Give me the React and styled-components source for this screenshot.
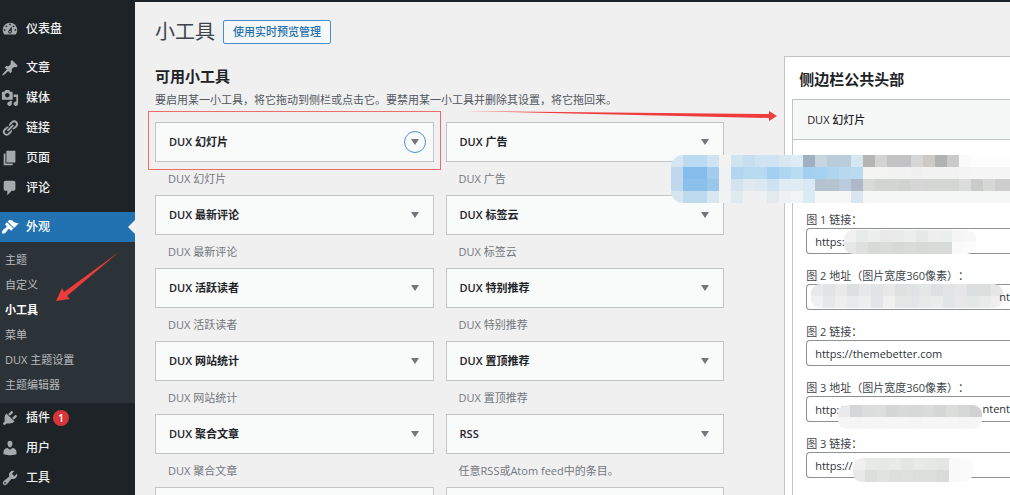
import React from 'react'
import styled, { createGlobalStyle, css } from 'styled-components'

const icons = {
  dashboard:
    'M3.76 16h12.48c1.1-1.37 1.76-3.11 1.76-5 0-4.42-3.58-8-8-8s-8 3.58-8 8c0 1.89.66 3.63 1.76 5zM10 4c.55 0 1 .45 1 1s-.45 1-1 1-1-.45-1-1 .45-1 1-1zM6 6c.55 0 1 .45 1 1s-.45 1-1 1-1-.45-1-1 .45-1 1-1zm8 0c.55 0 1 .45 1 1s-.45 1-1 1-1-.45-1-1 .45-1 1-1zm-5.37 5.55L12 7v6c0 1.1-.9 2-2 2s-2-.9-2-2c0-.57.24-1.08.63-1.45zM4 10c.55 0 1 .45 1 1s-.45 1-1 1-1-.45-1-1 .45-1 1-1zm12 0c.55 0 1 .45 1 1s-.45 1-1 1-1-.45-1-1 .45-1 1-1zm-5 3c0-.55-.45-1-1-1s-1 .45-1 1 .45 1 1 1 1-.45 1-1z',
  post:
    'M10.44 3.02l1.82-1.82 6.36 6.35-1.83 1.82c-1.05-.68-2.48-.57-3.41.36l-.75.75c-.92.93-1.04 2.35-.35 3.41l-1.83 1.82-2.41-2.41-2.8 2.79c-.42.42-3.38 2.71-3.8 2.29s1.86-3.39 2.28-3.81l2.79-2.79L4.1 9.36l1.83-1.82c1.05.69 2.48.57 3.4-.36l.75-.75c.93-.92 1.05-2.35.36-3.41z',
  media:
    'M13 11V4c0-.55-.45-1-1-1h-1.67L9 1H5L3.67 3H2c-.55 0-1 .45-1 1v7c0 .55.45 1 1 1h10c.55 0 1-.45 1-1zM7 4.5c1.38 0 2.5 1.12 2.5 2.5S8.38 9.5 7 9.5 4.5 8.38 4.5 7 5.62 4.5 7 4.5zM14 6h5v10.5c0 1.38-1.12 2.5-2.5 2.5S14 17.88 14 16.5s1.12-2.5 2.5-2.5c.17 0 .34.02.5.05V9h-3V6zm-4 8.05V13h2v3.5c0 1.38-1.12 2.5-2.5 2.5S7 17.88 7 16.5 8.12 14 9.5 14c.17 0 .34.02.5.05z',
  links:
    'M17.74 2.76c1.68 1.69 1.68 4.41 0 6.1l-1.53 1.52c-1.12 1.12-2.7 1.47-4.14 1.09l2.62-2.61.76-.77.76-.76c.84-.84.84-2.2 0-3.04-.84-.85-2.2-.85-3.04 0l-.77.76-3.38 3.38c-.37-1.44-.02-3.02 1.1-4.14l1.52-1.53c1.69-1.68 4.42-1.68 6.1 0zM8.59 13.43l5.34-5.34c.42-.42.42-1.1 0-1.52-.44-.43-1.13-.39-1.53 0l-5.33 5.34c-.42.42-.42 1.1 0 1.52.44.43 1.13.39 1.52 0zm-.76 2.29l4.14-4.15c.38 1.44.03 3.02-1.09 4.14l-1.52 1.53c-1.69 1.68-4.41 1.68-6.1 0-1.68-1.68-1.68-4.42 0-6.1l1.53-1.52c1.12-1.12 2.7-1.47 4.14-1.1l-4.14 4.15c-.85.84-.85 2.2 0 3.05.84.84 2.2.84 3.04 0z',
  page: 'M6 15V2h10v13H6zm-1 1h8v2H3V5h2v11z',
  comments:
    'M5 2h9c1.1 0 2 .9 2 2v7c0 1.1-.9 2-2 2h-2l-5 5v-5H5c-1.1 0-2-.9-2-2V4c0-1.1.9-2 2-2z',
  appearance:
    'M14.48 11.06L7.41 3.99l1.5-1.5c.5-.56 2.3-.47 3.51.32 1.21.8 1.43 1.28 2.91 2.1 1.18.64 2.45 1.26 4.45.85zm-.71.71L6.7 4.7 4.93 6.47c-.39.39-.39 1.02 0 1.41l1.06 1.06c.39.39.39 1.03 0 1.42-.6.6-1.43 1.11-2.21 1.69-.35.26-.7.53-1.01.84C1.43 14.23.4 16.08 1.4 17.07c.99 1 2.84-.03 4.18-1.36.31-.31.58-.66.85-1.02.57-.78 1.08-1.61 1.69-2.21.39-.39 1.02-.39 1.41 0l1.06 1.06c.39.39 1.02.39 1.41 0z',
  plugins:
    'M13.11 4.36L9.87 7.6 8 5.73l3.24-3.24c.35-.34 1.05-.2 1.56.32.52.51.66 1.21.31 1.55zm-8 1.77l.91-1.12 9.01 9.01-1.19.84c-.71.71-2.63 1.16-3.82 1.16H6.14L4.9 17.26c-.59.59-1.54.59-2.12 0-.59-.58-.59-1.53 0-2.12l1.24-1.24v-3.88c0-1.13.4-3.19 1.09-3.89zm7.26 3.97l3.24-3.24c.34-.35 1.04-.21 1.55.31.52.51.66 1.21.31 1.55l-3.24 3.25z',
  users:
    'M10 9.25c-2.27 0-2.73-3.44-2.73-3.44C7 4.02 7.82 2 9.97 2c2.16 0 2.98 2.02 2.71 3.81 0 0-.41 3.44-2.68 3.44zm0 2.57L12.72 10c2.39 0 4.52 2.33 4.52 4.53v2.49s-3.65 1.13-7.24 1.13c-3.65 0-7.24-1.13-7.24-1.13v-2.49c0-2.25 1.94-4.48 4.47-4.48z',
  tools:
    'M16.68 9.77c-1.34 1.34-3.3 1.67-4.95.99l-5.41 6.52c-.99.99-2.59.99-3.58 0s-.99-2.59 0-3.57l6.52-5.42c-.68-1.65-.35-3.61.99-4.95 1.28-1.28 3.12-1.62 4.72-1.06l-2.89 2.89 2.82 2.82 2.86-2.87c.53 1.58.18 3.39-1.08 4.65zM3.81 16.21c.4.39 1.04.39 1.43 0 .4-.4.4-1.04 0-1.43-.39-.4-1.03-.4-1.43 0-.39.39-.39 1.03 0 1.43z'
}

const contentMenu = [
  { icon: 'post', label: '文章' },
  { icon: 'media', label: '媒体' },
  { icon: 'links', label: '链接' },
  { icon: 'page', label: '页面' },
  { icon: 'comments', label: '评论' }
]

const appearanceMenu = ['主题', '自定义', '小工具', '菜单', 'DUX 主题设置', '主题编辑器']

const systemMenu = [
  { icon: 'plugins', label: '插件', count: 1 },
  { icon: 'users', label: '用户' },
  { icon: 'tools', label: '工具' }
]

const widgets = [
  { title: 'DUX 幻灯片', marked: true },
  { title: 'DUX 广告' },
  { title: 'DUX 最新评论' },
  { title: 'DUX 标签云' },
  { title: 'DUX 活跃读者' },
  { title: 'DUX 特别推荐' },
  { title: 'DUX 网站统计' },
  { title: 'DUX 置顶推荐' },
  { title: 'DUX 聚合文章' },
  { title: 'RSS', description: '任意RSS或Atom feed中的条目。' }
]

const fields = [
  {
    label: '图 1 链接：',
    value: 'https:',
    blur: {
      left: 38,
      top: 2,
      cell: 12,
      rows: [
        '#f0f1f0 #e9ebea #eceeed #e8e9e8 #e9ebea #eceeed #e6e7e7 #eeeeee #eceeed #f5f5f5 #f7f7f7',
        '#e6e8e6 #dfe0df #d8dad8 #dadcda #d7d9d7 #dadcda #d7d9d7 #d9dbd9 #d9dbd9 #fafafa #fbfbfb'
      ]
    }
  },
  {
    label: '图 2 地址（图片宽度360像素）：',
    value: '',
    tail: 'nt',
    blur: {
      left: 5,
      top: 0,
      cell: 12,
      rows: [
        '#e8e9e9 #e2e3e4 #e9e9e9 #dddfe1 #e7e8e9 #e2e3e4 #e8e8e8 #dfe1e1 #e1e2e4 #e5e6e6 #dddfe1 #e3e4e5 #e6e6e6 #dcddde #dddfde #e5e6e5',
        '#f0f0f0 #e5e7e8 #eeeeee #e9eaeb #eeeeee #e3e5e8 #eff0ef #e5e6e6 #e3e5e7 #e8eaea #eaebeb #e3e6e7 #e8e8e8 #e5e6e6 #e9eaea #eeeeee'
      ]
    }
  },
  { label: '图 2 链接：', value: 'https://themebetter.com' },
  {
    label: '图 3 地址（图片宽度360像素）：',
    value: 'http:/',
    tail: 'ntent',
    blur: {
      left: 32,
      top: 9,
      cell: 12,
      rows: [
        '#e9eae9 #d5d6d8 #dbdddc #dcdedc #d5d7d6 #d8dad9 #d7d9d9 #dadcda #d5d7d6 #dbdddb #d6d8d7 #d0d1d2',
        '#f5f6f5 #f4f5f4 #f6f6f6 #f4f5f4 #f5f6f5 #f6f6f6 #f4f5f4 #f6f6f6 #f5f6f5 #f6f6f6 #f4f5f4 #f6f6f6'
      ]
    }
  },
  {
    label: '图 3 链接：',
    value: 'https://',
    blur: {
      left: 47,
      top: 6,
      cell: 12,
      rows: [
        '#eff0ef #e8eae8 #e6e8e6 #e9eae9 #e4e6e4 #e8eae8 #e6e8e6 #e4e6e4 #fafafa #fafafa',
        '#e7e8e7 #dcdedc #e1e3e1 #dddfdd #dfe1df #dcdedc #dddfdd #d9dbd9 #f9f9f9 #fafafa'
      ]
    }
  }
]

const watermark = [
  '#d5e5f2 #bcdaf1 #bcdaf1 #cfe3f2 #f2f2f2 #cfe3f1 #c5def0 #cfe3f2 #cfe3f2 #d9e7f1 #dcebf6 #9fb1bf #c6d5e0 #bacbd9 #bacbd9 #d5e7f2 #b5b6b4 #d3d3d3 #c3c3c3 #c3c3c5 #d6d6d6 #cdc9c7 #b0b3b1 #cacaca #fafafa #fdfdfd #fdfdfd #fdfdfd #fdfdfd',
  '#bfd8ee #84bdeb #84bdeb #a3cdee #eff1f2 #b3d5ef #b8daf0 #b8daf0 #a5cff0 #aed6f1 #b8dcf2 #a5cfef #a5d2f3 #aed4ee #b6d8f0 #b8dbf2 #f3f3f0 #f3f3f2 #f2f2f0 #f2f2f2 #f0f0f0 #f2f2f0 #f2f2f2 #f2f2f2 #f4f4f4 #f5f5f5 #f5f5f5 #f5f5f5 #f5f5f5',
  '#bfd8ee #8ac0ea #8ac0ea #9bc7ea #eff0f1 #d3e3ef #e0e9f0 #dce8f1 #cfe2f1 #e0ebf3 #e0ebf3 #d9e8f4 #b5c3d0 #b5c3d0 #b9cbdc #afb8c8 #d8dad7 #d3d5d3 #d3d5d3 #d1d3d1 #d6d6d6 #d4d6d4 #d4d6d4 #d4d6d4 #dadddb #c9cac9 #d6d8d6 #cccdcc #cccdcc',
  '#d6e6f1 #bddaef #bddaef #d6e7f2 #f0f3f4 #dfeaef #f0f0f0 #eff0f1 #e2eaee #eef1f3 #f0f4f6 #d9ebf2 #f5f6f6 #f5f6f6 #f5f6f6 #d9e6f0 #f5f6f6 #f5f6f6 #f5f6f6 #f5f6f6 #f5f6f6 #f5f6f6 #f5f6f6 #f5f6f6 #f5f6f6 #f5f6f6 #f5f6f6 #f5f6f6 #f5f6f6'
]

const Icon = ({ name }) => (
  <IconSvg viewBox="0 0 20 20" aria-hidden="true">
    <path fillRule="evenodd" d={icons[name]} />
  </IconSvg>
)

const Mosaic = ({ rows, cell }) => {
  const cells = rows.map(row => row.split(' '))
  return (
    <MosaicSvg
      width={cells[0].length * cell}
      height={rows.length * cell}
      shapeRendering="crispEdges"
      aria-hidden="true"
    >
      {cells.map((row, y) =>
        row.map((color, x) => (
          <rect
            key={`${x}-${y}`}
            x={x * cell}
            y={y * cell}
            width={cell}
            height={cell}
            fill={color}
          />
        ))
      )}
    </MosaicSvg>
  )
}

const MenuItem = ({ icon, label, count, active }) => (
  <li>
    <MenuLink href="#" $active={active}>
      <Icon name={icon} />
      {label}
      {count && <Count>{count}</Count>}
    </MenuLink>
  </li>
)

const Widget = ({ title, description, marked }) => (
  <WidgetItem>
    <WidgetCard $marked={marked}>
      <WidgetTitle>{title}</WidgetTitle>
      <Toggle type="button" $focused={marked} aria-label={title}>
        <svg width="8" height="6" viewBox="0 0 8 6">
          <path d="M0 0h8L4 6z" fill="currentColor" />
        </svg>
      </Toggle>
    </WidgetCard>
    <WidgetDescription>{description || title}</WidgetDescription>
  </WidgetItem>
)

const Field = ({ id, label, value, tail, blur }) => (
  <FieldRow>
    <label htmlFor={id}>{label}</label>
    <InputBox>
      <Input id={id} type="text" defaultValue={value} />
      {blur && (
        <Overlay $left={blur.left} $top={blur.top} $radius={9}>
          <Mosaic rows={blur.rows} cell={blur.cell} />
        </Overlay>
      )}
      {tail && <Tail>{tail}</Tail>}
    </InputBox>
  </FieldRow>
)

const App = () => (
  <Page>
    <GlobalStyle />
    <Sidebar>
      <Menu>
        <MenuItem icon="dashboard" label="仪表盘" />
        <Separator />
        {contentMenu.map(item => (
          <MenuItem key={item.icon} {...item} />
        ))}
        <Separator />
        <MenuItem icon="appearance" label="外观" active />
      </Menu>
      <Submenu>
        {appearanceMenu.map(label => (
          <li key={label}>
            <SubmenuLink href="#" $current={label === '小工具'}>
              {label}
            </SubmenuLink>
          </li>
        ))}
        <MenuArrow viewBox="0 0 64 50" aria-hidden="true">
          <path d="M63 0L11 44l3 3L0 49l6-13 2 4z" />
        </MenuArrow>
      </Submenu>
      <Menu>
        {systemMenu.map(item => (
          <MenuItem key={item.icon} {...item} />
        ))}
      </Menu>
    </Sidebar>

    <Main>
      <TitleRow>
        <PageTitle>小工具</PageTitle>
        <PreviewButton type="button">使用实时预览管理</PreviewButton>
      </TitleRow>
      <Columns>
        <Available>
          <SectionTitle>可用小工具</SectionTitle>
          <Intro>
            要启用某一小工具，将它拖动到侧栏或点击它。要禁用某一小工具并删除其设置，将它拖回来。
          </Intro>
          <DragArrow viewBox="0 0 312 12" aria-hidden="true">
            <path d="M0 1L304 4V1l8 5-8 5V8z" />
          </DragArrow>
          <WidgetList>
            {widgets.map(widget => (
              <Widget key={widget.title} {...widget} />
            ))}
            <WidgetCard />
            <WidgetCard />
          </WidgetList>
        </Available>

        <Area>
          <SectionTitle>侧边栏公共头部</SectionTitle>
          <Instance>
            <InstanceHeader>DUX 幻灯片</InstanceHeader>
            <InstanceForm>
              {fields.map((field, index) => (
                <Field key={field.label} id={`field-${index}`} {...field} />
              ))}
            </InstanceForm>
          </Instance>
          <Overlay $left={-114} $top={98} $radius={12}>
            <Mosaic rows={watermark} cell={12} />
          </Overlay>
        </Area>
      </Columns>
    </Main>
  </Page>
)

const GlobalStyle = createGlobalStyle`
  * {
    box-sizing: border-box;
  }

  body {
    margin: 0;
    overflow: hidden;
    background: #f0f0f1;
    color: #3c434a;
    font-family: 'Open Sans', 'Noto Sans CJK SC', sans-serif;
    font-size: 11px;
    line-height: 16px;
    text-spacing-trim: space-all;
  }

  ul, h1, h2, h3, p {
    margin: 0;
    padding: 0;
  }

  ul {
    list-style: none;
  }

  button, input {
    font: inherit;
  }
`

const Page = styled.div`
  display: grid;
  grid-template-columns: 135px minmax(0, 1fr);
  height: 100vh;
  overflow: hidden;
  border-top: 2px solid #1d2327;
`

const Sidebar = styled.nav`
  padding-top: 12px;
  background: #1d2327;
`

const Menu = styled.ul``

const Separator = styled.li`
  height: 9px;
`

const IconSvg = styled.svg`
  width: 18px;
  height: 18px;
  fill: #a7aaad;
`

const MenuLink = styled.a`
  position: relative;
  display: flex;
  align-items: center;
  height: 30px;
  padding-left: 1px;
  color: #f0f0f1;
  font-size: 12px;
  font-weight: 500;
  text-decoration: none;

  ${IconSvg} {
    margin-right: 7px;
  }

  ${p =>
    p.$active &&
    css`
      background: #2271b1;
      color: #fff;

      ${IconSvg} {
        fill: #fff;
      }

      &::after {
        content: '';
        position: absolute;
        right: 0;
        border: 7px solid transparent;
        border-right-color: #f0f0f1;
        border-left-width: 0;
      }
    `}
`

const Count = styled.span`
  width: 16px;
  height: 16px;
  margin-left: 3px;
  border-radius: 8px;
  background: #d63638;
  color: #fff;
  font-size: 10px;
  font-weight: 600;
  text-align: center;
`

const Submenu = styled.ul`
  position: relative;
  padding: 5px 0 6px;
  background: #2c3338;
`

const SubmenuLink = styled.a`
  display: block;
  padding-left: 5px;
  color: ${p => (p.$current ? '#fff' : '#b9bcbf')};
  font-weight: ${p => (p.$current ? 700 : 400)};
  line-height: 25px;
  text-decoration: none;
`

const MenuArrow = styled.svg`
  position: absolute;
  top: 10px;
  left: 56px;
  width: 64px;
  fill: #ee3b3b;
`

const Main = styled.main`
  padding: 18px 0 0 20px;
`

const TitleRow = styled.header`
  display: flex;
  align-items: center;
  gap: 8px;
  height: 24px;
  margin-bottom: 12px;
`

const PageTitle = styled.h1`
  color: #3c434a;
  font-size: 20px;
  font-weight: 400;
  line-height: 24px;
`

const PreviewButton = styled.button`
  height: 24px;
  padding: 0 9px;
  border: 1px solid #4a90c8;
  border-radius: 2px;
  background: #f6f7f7;
  color: #2271b1;
  font-size: 11px;
  font-weight: 500;
  line-height: 16px;
`

const Columns = styled.div`
  display: grid;
  grid-template-columns: 63fr 25fr;
  align-items: start;
  gap: 60px;
`

const Available = styled.section`
  position: relative;
  padding-top: 8px;
`

const SectionTitle = styled.h2`
  color: #1d2327;
  font-size: 15px;
  font-weight: 600;
  line-height: 24px;
`

const Intro = styled.p`
  margin: 4px 0 14px;
  color: #50575e;
  white-space: nowrap;
`

const DragArrow = styled.svg`
  position: absolute;
  top: 54px;
  left: 310px;
  z-index: 1;
  width: 312px;
  fill: #ee3b3b;
`

const WidgetList = styled.div`
  display: grid;
  grid-template-columns: 1fr 1fr;
  column-gap: 12px;
`

const WidgetItem = styled.div`
  height: 73px;
`

const WidgetCard = styled.div`
  position: relative;
  display: flex;
  align-items: center;
  justify-content: space-between;
  height: 40px;
  padding: 0 7px 0 13px;
  border: 1px solid #c3c4c7;
  background: #f9fafa;

  ${p =>
    p.$marked &&
    css`
      &::after {
        content: '';
        position: absolute;
        inset: -12px -8px -9px;
        border: 1px solid #ee6b6b;
        pointer-events: none;
      }
    `}
`

const WidgetTitle = styled.h3`
  color: #1d2327;
  font-size: 11px;
  font-weight: 600;
`

const Toggle = styled.button`
  display: flex;
  align-items: center;
  justify-content: center;
  width: 22px;
  height: 22px;
  padding: 0;
  border: 1px solid ${p => (p.$focused ? '#4f94d4' : 'transparent')};
  border-radius: 50%;
  background: none;
  color: #72777c;
`

const WidgetDescription = styled.p`
  padding: 9px 13px;
  color: #72777c;
`

const Area = styled.section`
  position: relative;
  padding: 10px 0 0 7px;
  border: solid #c3c4c7;
  border-width: 1px 0 0 1px;
  background: #fff;

  ${SectionTitle} {
    padding-left: 7px;
  }
`

const Instance = styled.div`
  margin-top: 8px;
  border: solid #c3c4c7;
  border-width: 1px 0 0 1px;
`

const InstanceHeader = styled.h3`
  padding: 12px 14px 11px;
  border-bottom: 1px solid #c3c4c7;
  background: #f6f7f7;
  color: #1d2327;
  font-size: 11px;
  font-weight: 500;
`

const InstanceForm = styled.form`
  padding: 72px 0 20px 13px;
`

const FieldRow = styled.div`
  margin-bottom: 14px;

  label {
    display: block;
    white-space: nowrap;
  }
`

const InputBox = styled.div`
  position: relative;
`

const Input = styled.input`
  display: block;
  width: 100%;
  height: 26px;
  padding: 0 8px;
  border: 1px solid #8c8f94;
  border-right: 0;
  border-radius: 4px 0 0 4px;
  background: #fff;
  color: #2c3338;
`

const Overlay = styled.div`
  position: absolute;
  top: ${p => p.$top}px;
  left: ${p => p.$left}px;
  overflow: hidden;
  border-radius: ${p => p.$radius}px;
`

const MosaicSvg = styled.svg`
  display: block;
`

const Tail = styled.span`
  position: absolute;
  top: 5px;
  right: 0;
  color: #2c3338;
`

export default App
